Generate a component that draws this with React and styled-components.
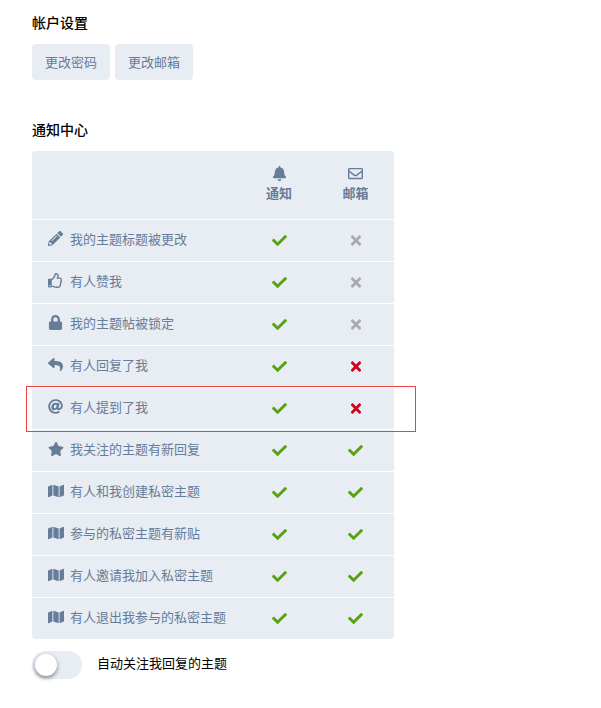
import styled, { createGlobalStyle } from "styled-components";
import {
  FaAt,
  FaBell,
  FaCheck,
  FaLock,
  FaMap,
  FaPencilAlt,
  FaRegEnvelope,
  FaRegThumbsUp,
  FaReply,
  FaStar,
  FaTimes,
} from "react-icons/fa";

const rows = [
  { icon: <FaPencilAlt />, label: "我的主题标题被更改", mail: "off" },
  { icon: <FaRegThumbsUp />, label: "有人赞我", mail: "off" },
  { icon: <FaLock />, label: "我的主题帖被锁定", mail: "off" },
  { icon: <FaReply />, label: "有人回复了我", mail: "no" },
  { icon: <FaAt />, label: "有人提到了我", mail: "no", marked: true },
  { icon: <FaStar />, label: "我关注的主题有新回复", mail: "yes", wide: true },
  { icon: <FaMap />, label: "有人和我创建私密主题", mail: "yes", wide: true },
  { icon: <FaMap />, label: "参与的私密主题有新贴", mail: "yes", wide: true },
  { icon: <FaMap />, label: "有人邀请我加入私密主题", mail: "yes", wide: true },
  { icon: <FaMap />, label: "有人退出我参与的私密主题", mail: "yes", wide: true },
];

const App = () => {
  return (
    <Page>
      <GlobalStyle />
      <Heading>帐户设置</Heading>
      <Buttons>
        <Button>更改密码</Button>
        <Button>更改邮箱</Button>
      </Buttons>

      <NoticeHeading>通知中心</NoticeHeading>
      <Grid>
        <HeaderRow>
          <span />
          <HeadCell>
            <FaBell />
            通知
          </HeadCell>
          <HeadCell>
            <FaRegEnvelope />
            邮箱
          </HeadCell>
        </HeaderRow>
        {rows.map((row) => (
          <Row key={row.label}>
            <Label>
              <RowIcon $wide={row.wide}>{row.icon}</RowIcon>
              {row.label}
            </Label>
            <Mark $state="yes">
              <FaCheck />
            </Mark>
            <Mark $state={row.mail}>
              {row.mail === "yes" ? <FaCheck /> : <FaTimes />}
            </Mark>
            {row.marked && <Highlight />}
          </Row>
        ))}
      </Grid>

      <ToggleRow>
        <Toggle>
          <Knob />
        </Toggle>
        <ToggleText>自动关注我回复的主题</ToggleText>
      </ToggleRow>
    </Page>
  );
};

export default App;

const GlobalStyle = createGlobalStyle`
  body {
    margin: 0;
    background: #fff;
    font-family: "Noto Sans CJK SC", "Liberation Sans", sans-serif;
  }
`;

const Page = styled.div`
  width: 601px;
  height: 708px;
  box-sizing: border-box;
  padding: 13px 0 0 32px;
  overflow: hidden;
`;

const Heading = styled.h3`
  margin: 0;
  font-size: 14px;
  line-height: 19px;
  font-weight: 500;
  color: #000;
`;

const NoticeHeading = styled(Heading)`
  margin-top: 40px;
`;

const Buttons = styled.div`
  display: flex;
  gap: 5px;
  margin-top: 12px;
`;

const Button = styled.button`
  width: 78px;
  height: 36px;
  padding: 0 0 2px;
  border: none;
  border-radius: 4px;
  background: #e8ecf3;
  color: #667d99;
  font-family: inherit;
  font-size: 13px;
`;

const Grid = styled.div`
  width: 362px;
  margin-top: 12px;
  border-radius: 4px;
  background: #e8ecf3;
`;

const HeaderRow = styled.div`
  display: grid;
  grid-template-columns: 209px 76px 77px;
  height: 68px;
  border-bottom: 1px solid #fff;
`;

const HeadCell = styled.div`
  display: flex;
  flex-direction: column;
  align-items: center;
  gap: 2px;
  padding-top: 15px;
  color: #667d99;
  font-size: 13px;
  line-height: 19px;
  font-weight: 700;

  svg {
    width: 15px;
    height: 15px;
  }
`;

const Row = styled.div`
  position: relative;
  display: grid;
  grid-template-columns: 209px 76px 77px;
  align-items: center;
  height: 41px;
  border-bottom: 1px solid #fff;

  &:last-child {
    border-bottom: none;
  }
`;

const Label = styled.div`
  display: flex;
  align-items: center;
  padding: 0 0 4px 16px;
  color: #667d99;
  font-size: 13px;
`;

const RowIcon = styled.span`
  display: flex;
  justify-content: center;
  width: 15px;
  margin-right: 7px;

  svg {
    flex: none;
    width: ${(props) => (props.$wide ? 16 : 15)}px;
    height: ${(props) => (props.$wide ? 16 : 15)}px;
  }
`;

const markColors = { yes: "#58a20f", off: "#aaaaaa", no: "#d0021b" };

const Mark = styled.div`
  display: flex;
  justify-content: center;
  padding-bottom: 1px;
  color: ${(props) => markColors[props.$state]};

  svg {
    width: ${(props) => (props.$state === "yes" ? 15 : 12)}px;
    height: 15px;
  }
`;

const Highlight = styled.div`
  position: absolute;
  left: -6px;
  top: -2px;
  width: 390px;
  height: 46px;
  box-sizing: border-box;
  border: 1px solid #f04040;
  pointer-events: none;
`;

const ToggleRow = styled.div`
  display: flex;
  align-items: center;
  gap: 15px;
  margin-top: 12px;
`;

const Toggle = styled.div`
  position: relative;
  width: 50px;
  height: 28px;
  border-radius: 14px;
  background: #e8ecf3;
`;

const Knob = styled.div`
  position: absolute;
  left: 3px;
  top: 3px;
  width: 22px;
  height: 22px;
  border-radius: 50%;
  background: #fff;
  box-shadow: 0 2px 4px rgba(0, 0, 0, 0.45);
`;

const ToggleText = styled.span`
  color: #000;
  font-size: 13px;
  padding-bottom: 6px;
`;
